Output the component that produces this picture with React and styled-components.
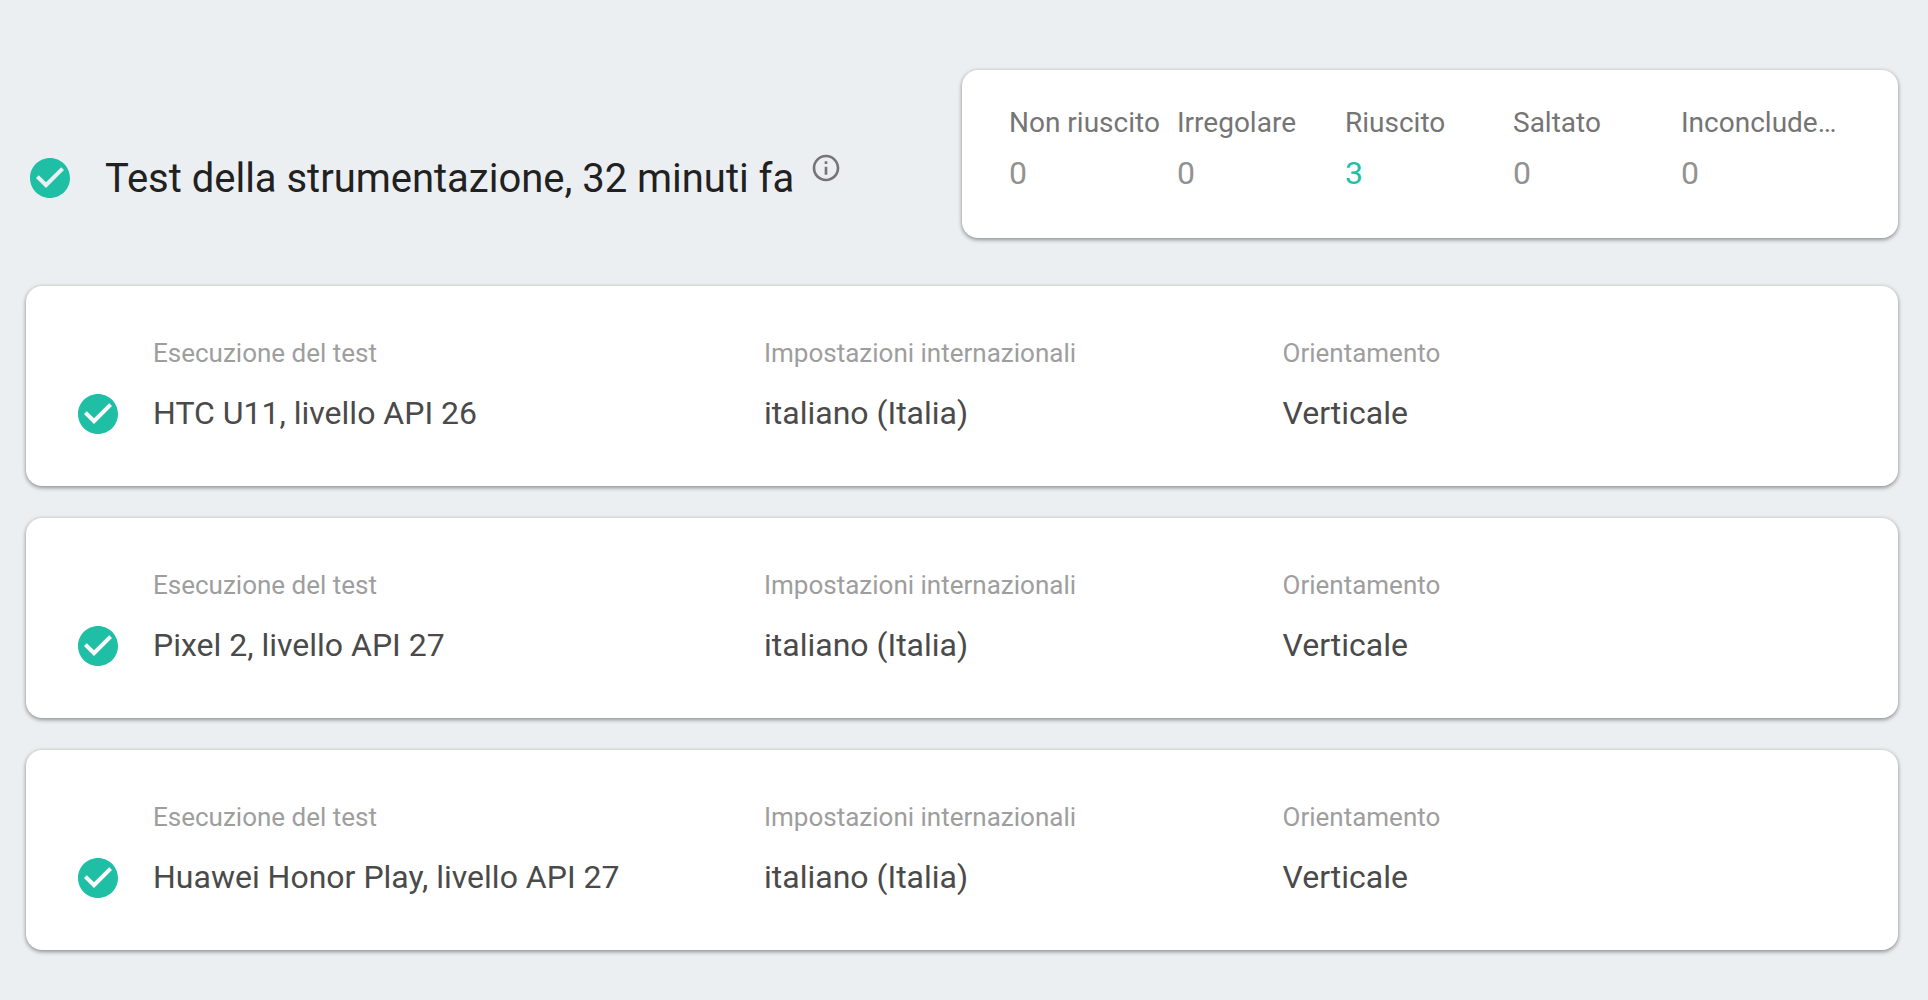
import React from "react";
import styled, { createGlobalStyle } from "styled-components";

const GlobalStyle = createGlobalStyle`
  *, *::before, *::after { box-sizing: border-box; }
  body {
    margin: 0;
    background: #ebeff2;
    font-family: Roboto, "Noto Sans", sans-serif;
  }
`;

const Page = styled.main`
  min-height: 1000px;
  padding: 70px 30px 50px 26px;
  background: #ebeff2;
`;

const Card = styled.section`
  background: #fff;
  border-radius: 16px;
  box-shadow: 0 2px 4px rgba(0, 0, 0, 0.34), 0 0 4px rgba(0, 0, 0, 0.12);
`;

const Header = styled.header`
  display: flex;
  justify-content: space-between;
  align-items: center;
  height: 168px;
  margin-bottom: 48px;
`;

const Heading = styled.div`
  display: flex;
  align-items: flex-start;
  height: 48px;
  margin-top: 48px;
`;

const Title = styled.h1`
  margin: 1px 0 0 31px;
  font-size: 40px;
  font-weight: 400;
  line-height: 48px;
  letter-spacing: -0.02px;
  white-space: nowrap;
  color: #212121;
`;

const Icon = styled.svg`
  display: block;
  flex: none;
  width: ${(p) => p.$size}px;
  height: ${(p) => p.$size}px;
  fill: ${(p) => p.$color};
`;

const InfoSlot = styled.span`
  margin: -2px 0 0 16px;
`;

const Summary = styled(Card)`
  display: grid;
  grid-template-columns: repeat(5, 168px);
  align-content: start;
  width: 936px;
  height: 168px;
  padding: 37px 0 0 47px;
`;

const CountLabel = styled.div`
  font-size: 28px;
  line-height: 32px;
  white-space: nowrap;
  color: #757575;
`;

const Count = styled.div`
  margin-top: 14px;
  font-size: 32px;
  line-height: 40px;
  color: ${(p) => (p.$active ? "#1fbfa5" : "#929292")};
`;

const List = styled.div`
  display: grid;
  gap: 32px;
`;

const Row = styled(Card)`
  display: grid;
  grid-template-columns: 79px 611px 518.5px 1fr;
  height: 200px;
  padding: 51px 48px 0;
`;

const RowIcon = styled.div`
  padding-top: 53px;
`;

const Label = styled.div`
  font-size: 26px;
  line-height: 32px;
  white-space: nowrap;
  color: #9e9e9e;
`;

const Value = styled.div`
  margin-top: 24px;
  font-size: 32px;
  line-height: 40px;
  white-space: nowrap;
  color: #4a4a4a;
`;

const CheckCircle = () => (
  <Icon $size={48} $color="#1fbfa5" viewBox="0 0 24 24" aria-hidden="true">
    <path d="M12 2C6.48 2 2 6.48 2 12s4.48 10 10 10 10-4.48 10-10S17.52 2 12 2zm-2 15l-5-5 1.41-1.41L10 14.17l7.59-7.59L19 8l-9 9z" />
  </Icon>
);

const InfoOutline = () => (
  <Icon $size={32} $color="#757575" viewBox="0 0 24 24" aria-hidden="true">
    <path d="M11 17h2v-6h-2v6zm1-15C6.48 2 2 6.48 2 12s4.48 10 10 10 10-4.48 10-10S17.52 2 12 2zm0 18c-4.41 0-8-3.59-8-8s3.59-8 8-8 8 3.59 8 8-3.59 8-8 8zM11 9h2V7h-2v2z" />
  </Icon>
);

const counts = [
  { label: "Non riuscito", value: 0 },
  { label: "Irregolare", value: 0 },
  { label: "Riuscito", value: 3 },
  { label: "Saltato", value: 0 },
  { label: "Inconclude…", value: 0 },
];

const runs = ["HTC U11, livello API 26", "Pixel 2, livello API 27", "Huawei Honor Play, livello API 27"];

const Field = ({ label, value }) => (
  <div>
    <Label>{label}</Label>
    <Value>{value}</Value>
  </div>
);

export default function App() {
  return (
    <>
      <GlobalStyle />
      <Page>
        <Header>
          <Heading>
            <CheckCircle />
            <Title>Test della strumentazione, 32 minuti fa</Title>
            <InfoSlot>
              <InfoOutline />
            </InfoSlot>
          </Heading>
          <Summary>
            {counts.map((c) => (
              <div key={c.label}>
                <CountLabel>{c.label}</CountLabel>
                <Count $active={c.value > 0}>{c.value}</Count>
              </div>
            ))}
          </Summary>
        </Header>
        <List>
          {runs.map((name) => (
            <Row key={name}>
              <RowIcon>
                <CheckCircle />
              </RowIcon>
              <Field label="Esecuzione del test" value={name} />
              <Field label="Impostazioni internazionali" value="italiano (Italia)" />
              <Field label="Orientamento" value="Verticale" />
            </Row>
          ))}
        </List>
      </Page>
    </>
  );
}
